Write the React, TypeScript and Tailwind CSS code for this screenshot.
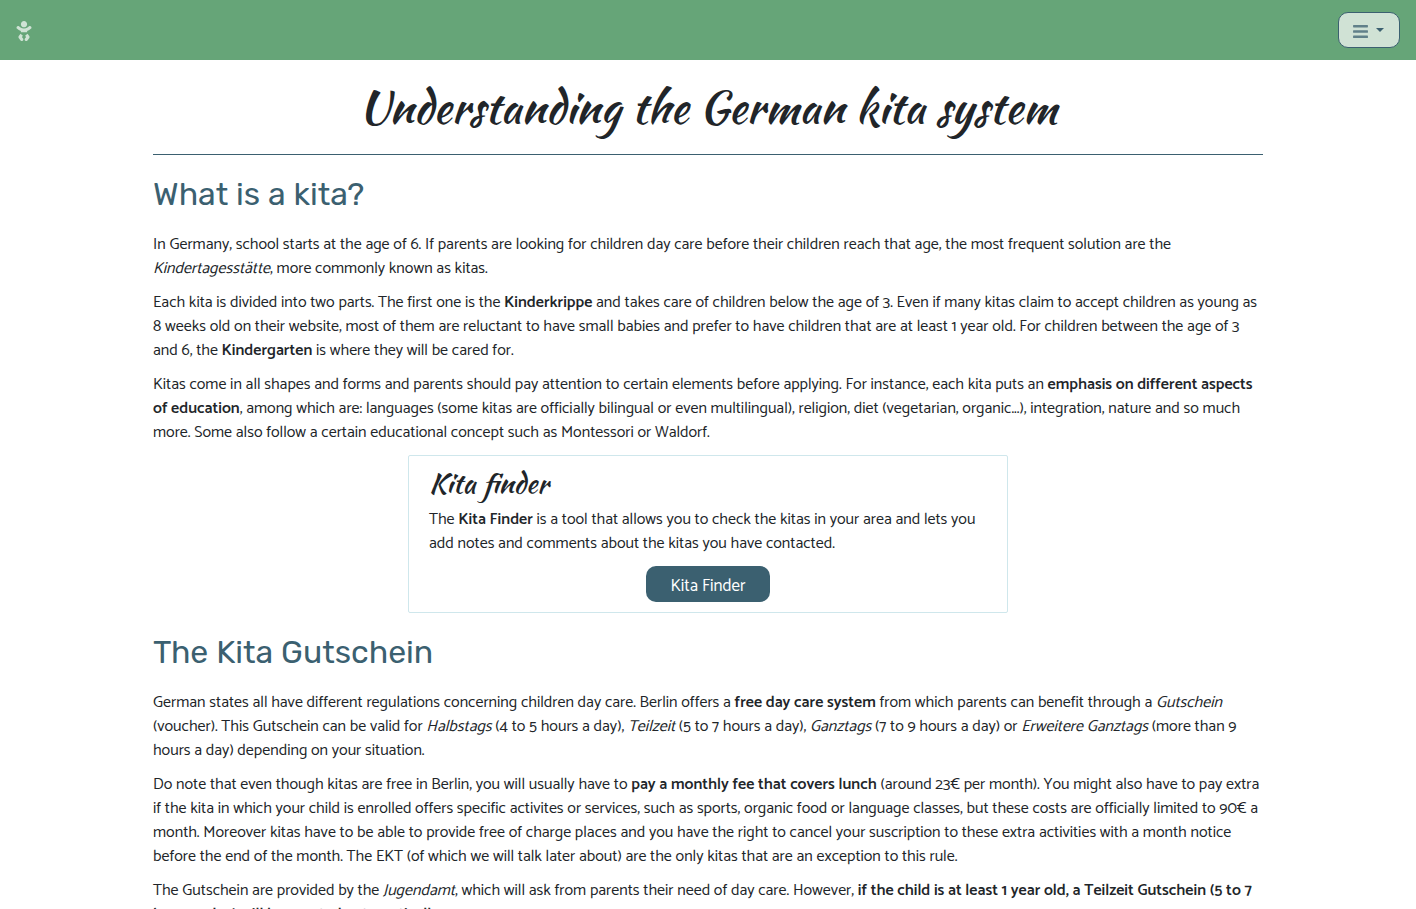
import type { ReactNode } from "react";
import { FaBaby, FaBars } from "react-icons/fa";

function Break() {
  return <br className="hidden xl:block" />;
}

function SectionTitle({ children }: { children: ReactNode }) {
  return (
    <h2 className="mt-5 mb-5 font-['Rubik','Roboto',sans-serif] text-[32px] leading-[38px] text-[#3b6070]">
      {children}
    </h2>
  );
}

function Text({ children }: { children: ReactNode }) {
  return <p className="mb-2.5">{children}</p>;
}

function Strong({ children }: { children: ReactNode }) {
  return <strong className="font-semibold">{children}</strong>;
}

export default function App() {
  return (
    <div className="min-h-screen bg-white font-['Catamaran','Open_Sans',sans-serif] text-base leading-6 text-[#212529]">
      <nav className="flex h-15 items-center justify-between bg-[#66a578] px-4">
        <a href="#home" aria-label="Home" className="text-[#cfe3d5]">
          <FaBaby className="mt-0.5 h-5 w-4" />
        </a>
        <button
          type="button"
          aria-label="Open menu"
          className="flex h-9 items-center gap-2 rounded-[10px] border border-[#3b6070] bg-[#d0e2d5] pr-[15px] pl-3.5 text-[#3b6070]"
        >
          <FaBars className="mt-0.5 h-[17px] w-[15px] opacity-75" />
          <svg viewBox="0 0 8 4" className="h-1 w-2" fill="currentColor" aria-hidden="true">
            <path d="M0 0h8L4 4z" />
          </svg>
        </button>
      </nav>

      <main className="mx-auto w-full max-w-[1140px] px-[15px]">
        <h1 className="border-b border-[#3b6070] pt-3 pb-3 text-center font-['Kaushan_Script','Liberation_Serif',cursive] text-[45px] leading-[70px] font-normal">
          Understanding the German kita system
        </h1>

        <SectionTitle>What is a kita?</SectionTitle>
        <Text>
          In Germany, school starts at the age of 6. If parents are looking for children day care before their children reach that age, the most frequent solution are the <Break />
          <em>Kindertagesstätte</em>, more commonly known as kitas.
        </Text>
        <Text>
          Each kita is divided into two parts. The first one is the <Strong>Kinderkrippe</Strong> and takes care of children below the age of 3. Even if many kitas claim to accept children as young as <Break />
          8 weeks old on their website, most of them are reluctant to have small babies and prefer to have children that are at least 1 year old. For children between the age of 3 <Break />
          and 6, the <Strong>Kindergarten</Strong> is where they will be cared for.
        </Text>
        <Text>
          Kitas come in all shapes and forms and parents should pay attention to certain elements before applying. For instance, each kita puts an <Strong>emphasis on different aspects <Break />
          of education</Strong>, among which are: languages (some kitas are officially bilingual or even multilingual), religion, diet (vegetarian, organic...), integration, nature and so much <Break />
          more. Some also follow a certain educational concept such as Montessori or Waldorf.
        </Text>

        <section className="mx-auto max-w-[600px] rounded-xs border border-[#cfe7ec] px-5 pt-2.5 pb-2.5">
          <h3 className="mb-2 font-['Kaushan_Script','Liberation_Serif',cursive] text-[28px] leading-[34px] font-normal">
            Kita finder
          </h3>
          <Text>
            The <Strong>Kita Finder</Strong> is a tool that allows you to check the kitas in your area and lets you <Break />
            add notes and comments about the kitas you have contacted.
          </Text>
          <div className="flex justify-center">
            <a href="#finder" className="flex h-9 items-center rounded-[10px] bg-[#3b6070] px-6 pt-1 text-[17px] text-white">
              Kita Finder
            </a>
          </div>
        </section>

        <SectionTitle>The Kita Gutschein</SectionTitle>
        <Text>
          German states all have different regulations concerning children day care. Berlin offers a <Strong>free day care system</Strong> from which parents can benefit through a <em>Gutschein</em> <Break />
          (voucher). This Gutschein can be valid for <em>Halbstags</em> (4 to 5 hours a day), <em>Teilzeit</em> (5 to 7 hours a day), <em>Ganztags</em> (7 to 9 hours a day) or <em>Erweitere Ganztags</em> (more than 9 <Break />
          hours a day) depending on your situation.
        </Text>
        <Text>
          Do note that even though kitas are free in Berlin, you will usually have to <Strong>pay a monthly fee that covers lunch</Strong> (around 23€ per month). You might also have to pay extra <Break />
          if the kita in which your child is enrolled offers specific activites or services, such as sports, organic food or language classes, but these costs are officially limited to 90€ a <Break />
          month. Moreover kitas have to be able to provide free of charge places and you have the right to cancel your suscription to these extra activities with a month notice <Break />
          before the end of the month. The EKT (of which we will talk later about) are the only kitas that are an exception to this rule.
        </Text>
        <Text>
          The Gutschein are provided by the <em>Jugendamt</em>, which will ask from parents their need of day care. However, <Strong>if the child is at least 1 year old, a Teilzeit Gutschein (5 to 7 <Break />
          hours a day) will be granted automatically</Strong>
        </Text>
      </main>
    </div>
  );
}
